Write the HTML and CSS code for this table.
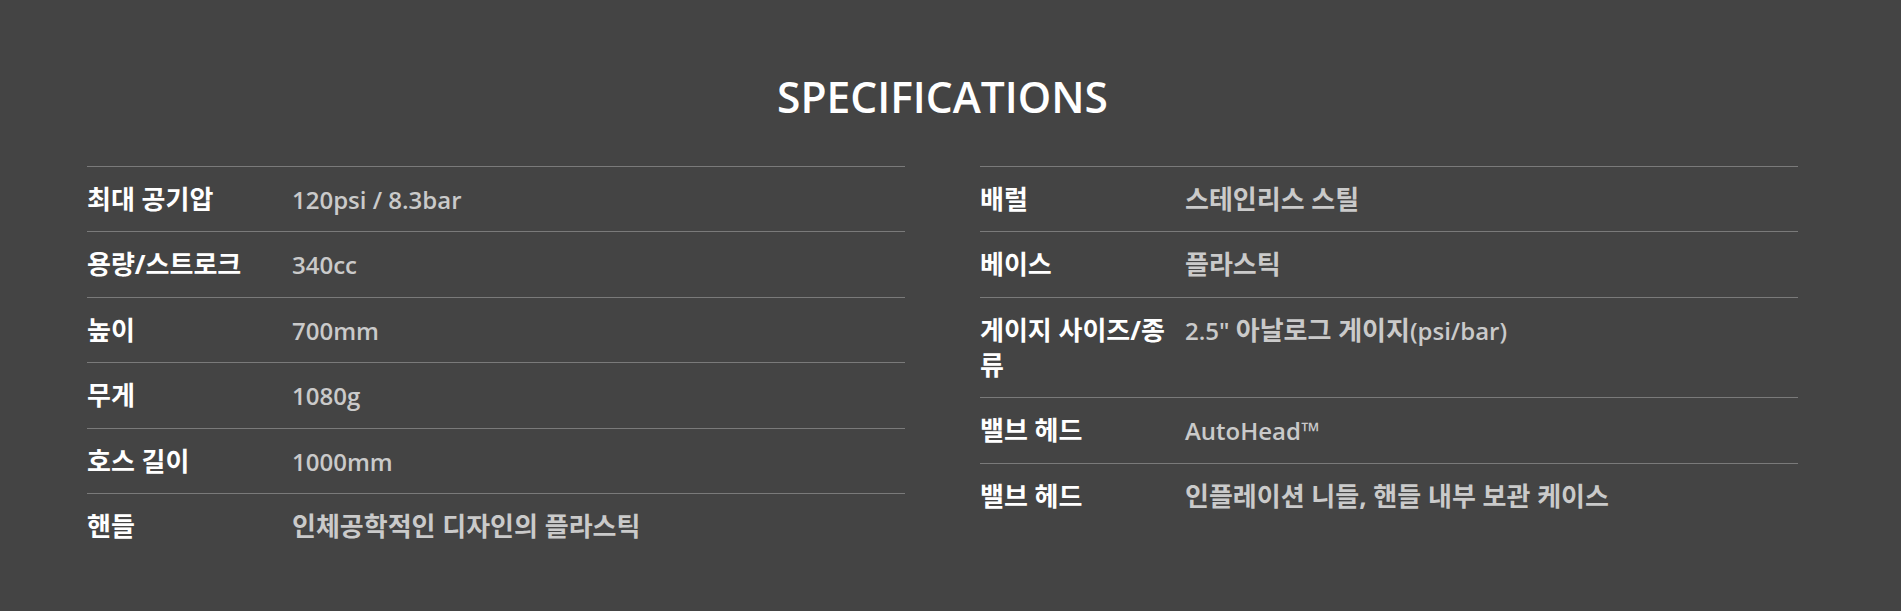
FILE: index.html
```html
<!DOCTYPE html>
<html lang="ko">
<head>
<meta charset="utf-8">
<title>Specifications</title>
<link rel="stylesheet" href="styles.css">
</head>
<body>
<section class="specs">
  <h2 class="specs-title">SPECIFICATIONS</h2>
  <div class="specs-grid">
    <dl class="spec-list">
      <div class="spec-row"><dt>최대 공기압</dt><dd>120psi / 8.3bar</dd></div>
      <div class="spec-row"><dt>용량/스트로크</dt><dd>340cc</dd></div>
      <div class="spec-row"><dt>높이</dt><dd>700mm</dd></div>
      <div class="spec-row"><dt>무게</dt><dd>1080g</dd></div>
      <div class="spec-row"><dt>호스 길이</dt><dd>1000mm</dd></div>
      <div class="spec-row"><dt>핸들</dt><dd><span class="ko">인체공학적인 디자인의 플라스틱</span></dd></div>
    </dl>
    <dl class="spec-list">
      <div class="spec-row"><dt>배럴</dt><dd><span class="ko">스테인리스 스틸</span></dd></div>
      <div class="spec-row"><dt>베이스</dt><dd><span class="ko">플라스틱</span></dd></div>
      <div class="spec-row"><dt>게이지 사이즈/종류</dt><dd>2.5" <span class="ko">아날로그 게이지</span>(psi/bar)</dd></div>
      <div class="spec-row"><dt>밸브 헤드</dt><dd>AutoHead™</dd></div>
      <div class="spec-row"><dt>밸브 헤드</dt><dd><span class="ko">인플레이션 니들, 핸들 내부 보관 케이스</span></dd></div>
    </dl>
  </div>
</section>
</body>
</html>
```
FILE: styles.css
```css
html, body {
  margin: 0;
  padding: 0;
  background: #444444;
}

body {
  font-family: "Open Sans", "Noto Sans CJK KR", sans-serif;
  color: #ffffff;
}

.specs {
  width: 1711px;
  padding: 71px 0 40px 87px;
}

.specs-title {
  margin: 0 0 43px;
  font-size: 42.5px;
  line-height: 52px;
  font-weight: 600;
  text-align: center;
  color: #ffffff;
}

.specs-grid {
  display: grid;
  grid-template-columns: 818px 818px;
  column-gap: 75px;
  align-items: start;
}

.spec-list {
  margin: 0;
}

.spec-row {
  display: flex;
  border-top: 1px solid #7a7a7a;
  padding: 15px 0 14.4px;
  line-height: 35px;
}

.spec-row dt {
  flex: 0 0 205px;
  box-sizing: border-box;
  padding-right: 4px;
  font-size: 26px;
  font-weight: 700;
  color: #ffffff;
}

.spec-row dd {
  margin: 0;
  flex: 1;
  font-size: 24px;
  font-weight: 600;
  color: #cacaca;
}

.spec-row dd .ko {
  font-size: 26px;
  font-weight: 700;
}
```
